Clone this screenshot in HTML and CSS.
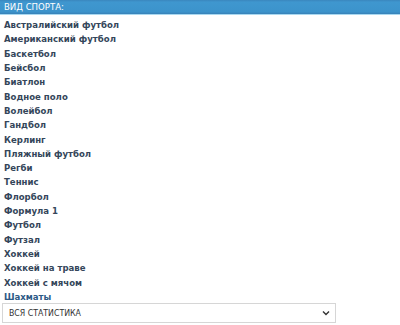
FILE: index.html
```html
<!DOCTYPE html>
<html lang="ru">
<head>
    <meta charset="UTF-8">
    <title>Вид спорта</title>
    <link rel="stylesheet" href="styles.css">
</head>
<body>
    <div class="sport-panel">
        <div class="panel-title">Вид спорта:</div>
        <ul class="sport-list">
            <li><a href="#">Австралийский футбол</a></li>
            <li><a href="#">Американский футбол</a></li>
            <li><a href="#">Баскетбол</a></li>
            <li><a href="#">Бейсбол</a></li>
            <li><a href="#">Биатлон</a></li>
            <li><a href="#">Водное поло</a></li>
            <li><a href="#">Волейбол</a></li>
            <li><a href="#">Гандбол</a></li>
            <li><a href="#">Керлинг</a></li>
            <li><a href="#">Пляжный футбол</a></li>
            <li><a href="#">Регби</a></li>
            <li><a href="#">Теннис</a></li>
            <li><a href="#">Флорбол</a></li>
            <li><a href="#">Формула 1</a></li>
            <li><a href="#">Футбол</a></li>
            <li><a href="#">Футзал</a></li>
            <li><a href="#">Хоккей</a></li>
            <li><a href="#">Хоккей на траве</a></li>
            <li><a href="#">Хоккей с мячом</a></li>
            <li><a href="#" class="active">Шахматы</a></li>
        </ul>
        <div class="stat-select">
            <span>ВСЯ СТАТИСТИКА</span>
            <svg class="chevron" width="8" height="6" viewBox="0 0 8 6">
                <path d="M1 1.5 L4 4.5 L7 1.5" fill="none" stroke="#333" stroke-width="1.4"/>
            </svg>
        </div>
    </div>
</body>
</html>
```

FILE: styles.css
```css
* {
    margin: 0;
    padding: 0;
    box-sizing: border-box;
}

body {
    font-family: 'DejaVu Sans Condensed', 'DejaVu Sans', Tahoma, sans-serif;
    background: #fff;
    width: 400px;
    height: 325px;
    overflow: hidden;
}

.panel-title {
    height: 15px;
    line-height: 13px;
    padding-left: 4px;
    font-size: 9.5px;
    text-transform: uppercase;
    color: #fff;
    background: linear-gradient(#3a86bd 0, #3f97cf 15%, #3c93cb 85%, #3880b6 100%);
    border-bottom: 1px solid #a9d8f0;
}

.sport-list {
    list-style: none;
    padding-top: 1px;
}

.sport-list li {
    height: 14.32px;
    line-height: 14.32px;
}

.sport-list a {
    padding-left: 4px;
    font-size: 9.5px;
    font-weight: bold;
    color: #34465a;
    text-decoration: none;
}

.sport-list a.active {
    color: #2d5a86;
}

.stat-select {
    display: flex;
    align-items: center;
    justify-content: space-between;
    margin: 1px 0 0 2px;
    width: 334px;
    height: 20px;
    padding: 0 5px 0 6px;
    border: 1px solid #d6d6d6;
    font-size: 8.7px;
    color: #333;
}
```
